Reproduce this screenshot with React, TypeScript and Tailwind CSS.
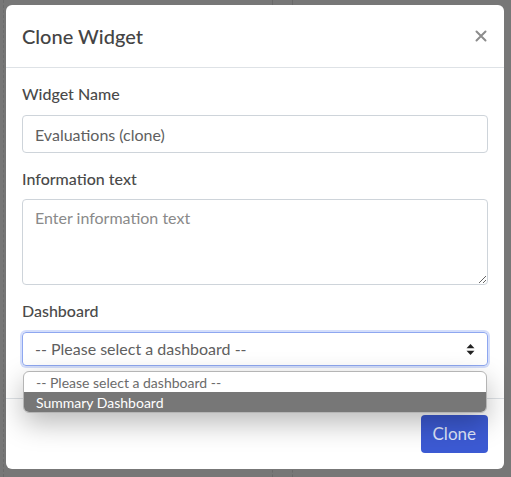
import React from "react";

export default function App() {
  return (
    <div
      className="relative w-[511px] h-[477px] overflow-hidden bg-[#777777]"
      style={{ fontFamily: "Lato, 'Noto Sans', sans-serif" }}
    >
      {/* faint background dashed lines */}
      <div className="absolute left-[3px] top-0 h-full border-l border-dashed border-[#6c6c6c]" />
      <div className="absolute left-[272px] top-0 h-[5px] border-l border-dashed border-[#6a6a6a]" />
      <div className="absolute left-[292px] top-0 h-[5px] border-l border-dashed border-[#6a6a6a]" />
      <div className="absolute left-[272px] top-[470px] h-[7px] border-l border-dashed border-[#6a6a6a]" />
      <div className="absolute left-[292px] top-[470px] h-[7px] border-l border-dashed border-[#6a6a6a]" />

      <div className="pt-[5px] pl-[6px]">
        <div className="relative w-[498px] bg-white rounded-[6px] flex flex-col">
          {/* header */}
          <div className="flex items-center justify-between px-4 py-4 border-b border-[#dee2e6]">
            <h5 className="text-[20px] leading-[30px] text-[#444444] font-medium">Clone Widget</h5>
            <svg width="12" height="12" viewBox="0 0 12 12" className="mr-[1px]">
              <path d="M1.5 1.5 L10.5 10.5 M10.5 1.5 L1.5 10.5" stroke="#8c8c8c" strokeWidth="2" strokeLinecap="round" />
            </svg>
          </div>

          {/* body */}
          <div className="px-4 pt-4 pb-4 flex flex-col">
            <div className="mb-4 flex flex-col">
              <label className="text-[16px] leading-[19px] font-medium text-[#4a4a4a] mb-[12px]">Widget Name</label>
              <input
                readOnly
                value="Evaluations (clone)"
                className="h-[38px] w-full rounded-[4px] border border-[#ced4da] px-3 text-[16px] text-[#606060] outline-none"
                style={{ fontFamily: "Lato, 'Noto Sans', sans-serif" }}
              />
            </div>
            <div className="mb-4 flex flex-col">
              <label className="text-[16px] leading-[19px] font-medium text-[#4a4a4a] mb-[11px]">Information text</label>
              <textarea
                placeholder="Enter information text"
                className="h-[86px] w-full rounded-[4px] border border-[#ced4da] px-3 py-[6px] text-[16px] text-[#606060] placeholder:text-[#8a8a8a] outline-none block"
                style={{ fontFamily: "Lato, 'Noto Sans', sans-serif" }}
              />
            </div>
            <div className="mb-4 flex flex-col">
              <label className="text-[16px] leading-[19px] font-medium text-[#4a4a4a] mb-[12px]">Dashboard</label>
              <div className="h-[34px] w-full rounded-[4px] border border-[#8ea7f0] shadow-[0_0_0_2px_#d4defb] flex items-center justify-between pl-3 pr-3">
                <span className="text-[16px] text-[#606060]">-- Please select a dashboard --</span>
                <svg width="9" height="11" viewBox="0 0 9 11">
                  <path d="M4.5 0 L8.5 4.2 L0.5 4.2 Z" fill="#222" />
                  <path d="M4.5 11 L8.5 6.8 L0.5 6.8 Z" fill="#222" />
                </svg>
              </div>
            </div>
          </div>

          {/* footer */}
          <div className="border-t border-[#dee2e6] p-4 flex justify-end">
            <button className="h-[38px] px-3 rounded-[4px] bg-[#3c5ad3] text-[#dfe5fa] text-[17px]">Clone</button>
          </div>

          {/* dropdown list */}
          <div className="absolute left-[17px] top-[366px] w-[464px] rounded-[6px] border border-[#b5b5b5] bg-white overflow-hidden shadow-[0_10px_28px_rgba(0,0,0,0.28)]">
            <div className="h-[20px] pl-3 flex items-center text-[14px] text-[#6b6b6b]">-- Please select a dashboard --</div>
            <div className="h-[20px] pl-3 flex items-center text-[14px] text-white bg-[#777777]">Summary Dashboard</div>
          </div>
        </div>
      </div>
    </div>
  );
}
